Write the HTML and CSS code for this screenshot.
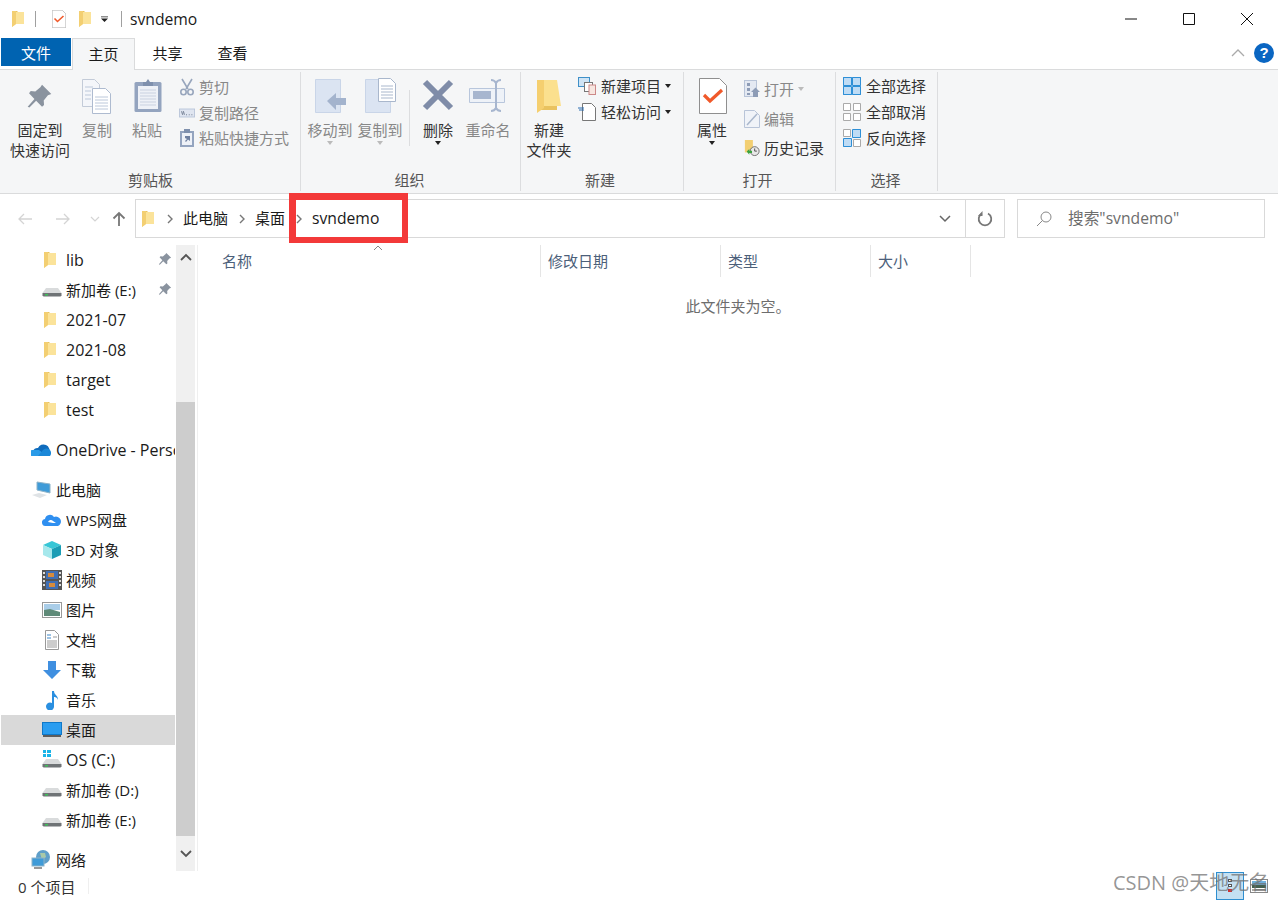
FILE: index.html

```html
<!DOCTYPE html>
<html lang="en">
<head>
  <meta charset="UTF-8" />
  <meta name="viewport" content="width=device-width, initial-scale=1.0" />
  <title>svndemo</title>
  <link rel="stylesheet" href="styles.css">
</head>
<body>
  <svg class="sprite" width="0" height="0">
    <symbol id="folder" viewBox="0 0 14 18">
      <path fill="#e9c25f" d="M1 1h5l1 1h6v12H1z"/>
      <path fill="#fbe39a" d="M1 2l5 0 0 0h7v12H5L1 17z"/>
      <path fill="#f3cf72" d="M1 1h4v13L1 17z"/>
    </symbol>
    <symbol id="pin" viewBox="0 0 16 16">
      <path fill="#8a939f" d="M9.500 1l5.500 5.500-2 .8-2.500 3 .2 2.700-1.200 1L6 10.500 2 14.500 1 14l4-4.500L1.800 6l1-1.200 2.700.2 3-2.500z"/>
    </symbol>
    <symbol id="drive" viewBox="0 0 20 12">
      <path fill="#d9dbdc" d="M4 2h12l3.500 5H.5z"/>
      <path fill="#6f7376" d="M.5 7h19v2.500l-1 1H1.500l-1-1z"/>
      <rect x="3" y="8" width="3" height="1.500" fill="#3fc05a"/>
    </symbol>
    <symbol id="doc-check" viewBox="0 0 28 36">
      <path fill="#fff" stroke="#8f8f8f" d="M.5.500h20l7 7v28H.5z"/>
      <path fill="none" stroke="#f0592a" stroke-width="3.200" d="M5 17l6 6L23 12"/>
    </symbol>
    <symbol id="grid" viewBox="0 0 18 18">
      <path fill="#fff" stroke="#aaa" d="M.5.500h7v7h-7zM10.500.500h7v7h-7zM.5 10.500h7v7h-7zM10.500 10.500h7v7h-7z"/>
    </symbol>
    <symbol id="chev-right" viewBox="0 0 8 10">
      <path fill="none" stroke="#777" stroke-width="1.400" d="M2 1l4 4-4 4"/>
    </symbol>
  </svg>

  <div class="window">
    <header class="titlebar">
      <div class="qat">
        <svg class="ic-folder"><use href="#folder"/></svg>
        <span class="qat-sep"></span>
        <svg class="ic-qat-check"><use href="#doc-check"/></svg>
        <svg class="ic-folder"><use href="#folder"/></svg>
        <svg class="ic-qat-drop" viewBox="0 0 8 8"><path d="M0 1h8v1H0zM0 3.500h8L4 7.500z" fill="#222"/></svg>
        <span class="qat-sep"></span>
        <span class="title-text">svndemo</span>
      </div>
      <div class="win-controls">
        <svg class="win-btn" viewBox="0 0 12 12"><path d="M0 6h12" stroke="#111"/></svg>
        <svg class="win-btn" viewBox="0 0 12 12"><path d="M.5.500h11v11H.5z" fill="none" stroke="#111"/></svg>
        <svg class="win-btn" viewBox="0 0 12 12"><path d="M0 0l12 12M12 0L0 12" stroke="#111"/></svg>
      </div>
    </header>

    <nav class="tabs">
      <div class="tab tab-file">文件</div>
      <div class="tab tab-active">主页</div>
      <div class="tab tab-plain">共享</div>
      <div class="tab tab-plain">查看</div>
      <div class="tabs-right">
        <svg class="ic-collapse" viewBox="0 0 14 8"><path d="M1 7l6-6 6 6" fill="none" stroke="#aaa" stroke-width="1.300"/></svg>
        <span class="help">?</span>
      </div>
    </nav>

    <section class="ribbon">
      <div class="group group-clip">
        <div class="group-body">
          <div class="big big-pin">
            <svg class="big-icon" viewBox="0 0 32 36"><use href="#pin" x="2" y="5" width="27" height="27"/></svg>
            <span>固定到<br>快速访问</span>
          </div>
          <div class="big big-copy dim">
            <svg class="big-icon" viewBox="0 0 32 36">
              <path fill="#f4f6fa" stroke="#c3cbd8" d="M1.500 1.500h12l5 5v22h-17z"/>
              <path fill="#fff" stroke="#aebbd0" d="M11.500 10.500h13l5 5v20h-18z"/>
              <path stroke="#bcc8da" d="M4 9h8M4 13h6M4 17h6M4 21h6M14 19h13M14 22h13M14 25h13M14 28h13M14 31h13"/>
            </svg>
            <span>复制</span>
          </div>
          <div class="big big-paste dim">
            <svg class="big-icon" viewBox="0 0 32 36">
              <path fill="#94a4bf" d="M5 4h24a1.500 1.500 0 0 1 1.500 1.500v27A1.500 1.500 0 0 1 29 34H5a1.500 1.500 0 0 1-1.500-1.500v-27A1.500 1.500 0 0 1 5 4z"/>
              <path fill="#eef1f7" d="M7 8h20v23H7z"/>
              <path fill="#7f90ad" d="M12 4h3l2-3 2 3h3v4H12z"/>
              <path stroke="#c9d1e0" d="M9 12h16M9 15h16M9 18h16M9 21h16M9 24h16M9 27h16"/>
            </svg>
            <span>粘贴</span>
          </div>
          <div class="small-col col-clip dim">
            <div class="small">
              <svg class="small-icon" viewBox="0 0 16 18"><path fill="none" stroke="#98a6bd" stroke-width="1.600" d="M3 1l6 10M13 1L7 11"/><circle cx="4.500" cy="14" r="2.700" fill="none" stroke="#98a6bd" stroke-width="1.600"/><circle cx="11.500" cy="14" r="2.700" fill="none" stroke="#98a6bd" stroke-width="1.600"/></svg>
              <span>剪切</span>
            </div>
            <div class="small">
              <svg class="small-icon" viewBox="0 0 18 12"><rect x=".5" y="1.500" width="17" height="9" fill="#dfe5f0" stroke="#b8c4d8"/><path d="M3 4l1 4M5 4l1 4M8 8h1M11 8h1M14 8h1" stroke="#5c6a80"/></svg>
              <span>复制路径</span>
            </div>
            <div class="small">
              <svg class="small-icon" viewBox="0 0 16 18"><path fill="#94a4bf" d="M1 2h14v16H1z"/><path fill="#eef1f7" d="M3 4h10v12H3z"/><path fill="#7f90ad" d="M5 0h6v4H5z"/><path fill="#6f80a0" d="M6 7h5v5l-2-1.500L7 13l-1-1 2-2-2-1z"/></svg>
              <span>粘贴快捷方式</span>
            </div>
          </div>
        </div>
        <div class="group-label">剪贴板</div>
      </div>

      <div class="group group-org">
        <div class="group-body">
          <div class="big big-50 dim">
            <svg class="big-icon" viewBox="0 0 32 36">
              <path fill="#dbe4f2" stroke="#c9d5e8" d="M1.500 1.500h25v33h-25z"/>
              <path fill="#a3b3cd" d="M13 23l9-8v5h10v7H22v5z"/>
            </svg>
            <span>移动到</span>
            <i class="caret caret-light"></i>
          </div>
          <div class="big big-50 dim">
            <svg class="big-icon" viewBox="0 0 32 36">
              <path fill="#dbe4f2" stroke="#c9d5e8" d="M1.500 1.500h25v33h-25z"/>
              <path fill="#fff" stroke="#a9b7cc" d="M14.500.500h12l5 5v18h-17z"/>
              <path stroke="#a9b7cc" d="M17 8h12M17 11h12M17 14h12M17 17h12M17 20h12"/>
            </svg>
            <span>复制到</span>
            <i class="caret caret-light"></i>
          </div>
          <span class="vsep"></span>
          <div class="big big-50">
            <svg class="big-icon" viewBox="0 0 32 36"><path stroke="#7f8ca8" stroke-width="6" d="M3 4l26 26M29 4L3 30"/></svg>
            <span>删除</span>
            <i class="caret"></i>
          </div>
          <div class="big big-50 dim">
            <svg class="big-icon big-icon-wide" viewBox="0 0 38 36">
              <path fill="#eef2f8" stroke="#b8c6dc" d="M.5 10.500h35v14H.5z"/>
              <rect x="4" y="13" width="18" height="8" fill="#a7b6cf"/>
              <path fill="none" stroke="#a7b6cf" stroke-width="2" d="M22 2c3 0 4 1 5 3 1-2 2-3 5-3M27 5v26M22 33c3 0 4-1 5-3 1 2 2 3 5 3"/>
            </svg>
            <span>重命名</span>
          </div>
        </div>
        <div class="group-label">组织</div>
      </div>

      <div class="group group-new">
        <div class="group-body">
          <div class="big big-new">
            <svg class="big-icon" viewBox="0 0 32 36">
              <path fill="#e9c25f" d="M4 2h20v30H4z"/>
              <path fill="#fbe08e" d="M10 2h14l4 26H10z"/>
              <path fill="#f5cf6f" d="M4 2h7v28l-7 5z"/>
            </svg>
            <span>新建<br>文件夹</span>
          </div>
          <div class="small-col col-new">
            <div class="small">
              <svg class="small-icon-l" viewBox="0 0 18 18">
                <rect x=".5" y=".5" width="11" height="9" fill="#cfe4f5" stroke="#3f90c8"/>
                <rect x="6.500" y="5.500" width="8" height="9" fill="#fff" stroke="#777"/>
                <rect x="11" y="8" width="6.500" height="9.500" fill="#f7e6e0" stroke="#c88"/>
              </svg>
              <span>新建项目</span><i class="caret caret-side"></i>
            </div>
            <div class="small">
              <svg class="small-icon-l" viewBox="0 0 18 18">
                <path fill="#fff" stroke="#777" d="M4.500.500h9l4 4v13h-13z"/>
                <path stroke="#2b6cb0" d="M0 5h6M1 7h5"/>
              </svg>
              <span>轻松访问</span><i class="caret caret-side"></i>
            </div>
          </div>
        </div>
        <div class="group-label">新建</div>
      </div>

      <div class="group group-open">
        <div class="group-body">
          <div class="big big-prop">
            <svg class="big-icon" viewBox="0 0 32 36"><use href="#doc-check" x="3" y="0" width="28" height="36"/></svg>
            <span>属性</span>
            <i class="caret"></i>
          </div>
          <div class="small-col col-open">
            <div class="small dim">
              <svg class="small-icon" viewBox="0 0 16 18"><rect x=".5" y=".5" width="12" height="16" fill="#e4e9f2" stroke="#b8c4d8"/><path d="M3 3h3v3H3zM3 8h3v3H3zM3 13h3v2H3z" fill="#8d9cb6"/><path fill="#8d9cb6" d="M7 12l4.500-4.500L16 12h-2v5H9v-5z"/></svg>
              <span>打开</span><i class="caret caret-light caret-side"></i>
            </div>
            <div class="small dim">
              <svg class="small-icon" viewBox="0 0 16 18"><path fill="#f0f3f8" stroke="#b8c4d8" d="M.5.500h10l5 5v12H.5z"/><path fill="none" stroke="#a9b7cc" stroke-width="1.500" d="M3 15L13 4"/></svg>
              <span>编辑</span>
            </div>
            <div class="small">
              <svg class="small-icon" viewBox="0 0 18 18"><path fill="#f3cf72" d="M1 0h9v14H1z"/><circle cx="12" cy="12.500" r="5" fill="#e8e8e8" stroke="#666"/><path d="M12 9.500v3h2.500" fill="none" stroke="#444"/><path fill="#3aa341" d="M3 13l3-3v2h3v2.500H6v2z"/></svg>
              <span>历史记录</span>
            </div>
          </div>
        </div>
        <div class="group-label">打开</div>
      </div>

      <div class="group group-sel">
        <div class="group-body">
          <div class="small-col col-sel">
            <div class="small">
              <svg class="small-icon" viewBox="0 0 18 18"><path fill="#bfdcf5" stroke="#2e8fd6" d="M.5.500h17v17H.5z"/><path stroke="#fff" stroke-width="1.500" d="M9 .5v17M.5 9h17"/><path stroke="#2e8fd6" d="M.5 .5h8v8h-8zM9.500 .5h8v8h-8zM.5 9.500h8v8h-8zM9.500 9.500h8v8h-8z" fill="none"/></svg>
              <span>全部选择</span>
            </div>
            <div class="small">
              <svg class="small-icon" viewBox="0 0 18 18"><use href="#grid"/></svg>
              <span>全部取消</span>
            </div>
            <div class="small">
              <svg class="small-icon" viewBox="0 0 18 18"><use href="#grid"/><path fill="#bfdcf5" stroke="#2e8fd6" d="M9.500.500h8v8h-8zM.5 9.500h8v8h-8z"/></svg>
              <span>反向选择</span>
            </div>
          </div>
        </div>
        <div class="group-label">选择</div>
      </div>
    </section>

    <div class="addr-row">
      <div class="nav-btns">
        <svg class="nav-arrow" viewBox="0 0 16 14"><path d="M15 7H2M7 2L2 7l5 5" fill="none" stroke="#d4d4d4" stroke-width="1.300"/></svg>
        <svg class="nav-arrow" viewBox="0 0 16 14"><path d="M1 7h13M9 2l5 5-5 5" fill="none" stroke="#d4d4d4" stroke-width="1.300"/></svg>
        <svg class="nav-down" viewBox="0 0 10 6"><path d="M1 1l4 4 4-4" fill="none" stroke="#d4d4d4" stroke-width="1.200"/></svg>
        <svg class="nav-up" viewBox="0 0 14 16"><path d="M7 15V2M1.500 7.500L7 2l5.500 5.500" fill="none" stroke="#777" stroke-width="1.800"/></svg>
      </div>
      <div class="addr-box">
        <svg class="ic-folder"><use href="#folder"/></svg>
        <svg class="crumb-chev"><use href="#chev-right"/></svg>
        <span class="crumb">此电脑</span>
        <svg class="crumb-chev"><use href="#chev-right"/></svg>
        <span class="crumb">桌面</span>
        <svg class="crumb-chev"><use href="#chev-right"/></svg>
        <span class="crumb crumb-latin">svndemo</span>
        <div class="addr-end">
          <svg class="addr-drop" viewBox="0 0 12 8"><path d="M1 1l5 5 5-5" fill="none" stroke="#666" stroke-width="1.500"/></svg>
        </div>
        <div class="addr-refresh">
          <svg class="refresh-icon" viewBox="0 0 16 16"><path d="M5 2.500A6.300 6.300 0 1 0 11 2.500" fill="none" stroke="#777" stroke-width="1.800"/><path d="M5.500 0v5H1z" fill="#777"/></svg>
        </div>
      </div>
      <div class="search-box">
        <svg class="search-icon" viewBox="0 0 16 16"><circle cx="10" cy="6" r="5" fill="none" stroke="#888"/><path d="M6.500 9.500L1 15" stroke="#888"/></svg>
        <span class="search-text">搜索"svndemo"</span>
      </div>
    </div>

    <main class="content">
      <aside class="sidebar">
        <div class="tree">
          <div class="row row-2"><svg class="ic-folder"><use href="#folder"/></svg><span class="name latin">lib</span><svg class="row-pin"><use href="#pin"/></svg></div>
          <div class="row row-2"><svg class="ic-drive"><use href="#drive"/></svg><span class="name">新加卷 (E:)</span><svg class="row-pin"><use href="#pin"/></svg></div>
          <div class="row row-2"><svg class="ic-folder"><use href="#folder"/></svg><span class="name latin">2021-07</span></div>
          <div class="row row-2"><svg class="ic-folder"><use href="#folder"/></svg><span class="name latin">2021-08</span></div>
          <div class="row row-2"><svg class="ic-folder"><use href="#folder"/></svg><span class="name latin">target</span></div>
          <div class="row row-2"><svg class="ic-folder"><use href="#folder"/></svg><span class="name latin">test</span></div>

          <div class="row row-1 row-gap">
            <svg class="ic-row" viewBox="0 0 20 14"><path fill="#0f6cbd" d="M2 8a5 5 0 0 1 5-3 6 6 0 0 1 11 5z"/><path fill="#2a9be8" d="M1 13a3 3 0 0 1 1-6h6l7 6z"/><path fill="#1b88d8" d="M7 13l5-6a4 4 0 0 1 7 6z"/></svg>
            <span class="name latin">OneDrive - Personal</span>
          </div>

          <div class="row row-1 row-gap">
            <svg class="ic-row" viewBox="0 0 20 18"><path fill="#3f9bd8" stroke="#8db3c9" d="M6 1l13 2v9L6 9z"/><path fill="#dfe3e6" d="M1 14l7-2 8 2-7 3z"/></svg>
            <span class="name">此电脑</span>
          </div>
          <div class="row row-2">
            <svg class="ic-row" viewBox="0 0 20 14"><path fill="#2f8ff0" d="M4 13a3.500 3.500 0 0 1-1-7 5 5 0 0 1 9-2 4.500 4.500 0 0 1 4 9z"/><path fill="#fff" d="M6 9a3 3 0 0 1 5-1l3 2h-3z"/></svg>
            <span class="name">WPS网盘</span>
          </div>
          <div class="row row-2">
            <svg class="ic-row" viewBox="0 0 20 18"><path fill="#37c6d6" d="M10 0l9 4-9 4-9-4z"/><path fill="#a6e8ec" d="M1 4l9 4v10l-9-4z"/><path fill="#1a9db5" d="M19 4l-9 4v10l9-4z"/></svg>
            <span class="name">3D 对象</span>
          </div>
          <div class="row row-2">
            <svg class="ic-row" viewBox="0 0 20 20"><rect width="20" height="20" fill="#555"/><rect x="4" y="1" width="12" height="8" fill="#3f6fb5"/><rect x="4" y="11" width="12" height="8" fill="#3f6fb5"/><path fill="#d68b3c" d="M6 3h6v4H6zM7 13h6v4H7z"/><path fill="#ddd" d="M1 2h2v2H1zM1 6h2v2H1zM1 10h2v2H1zM1 14h2v2H1zM17 2h2v2h-2zM17 6h2v2h-2zM17 10h2v2h-2zM17 14h2v2h-2z"/></svg>
            <span class="name">视频</span>
          </div>
          <div class="row row-2">
            <svg class="ic-row" viewBox="0 0 20 16"><rect x=".5" y=".5" width="19" height="15" fill="#fff" stroke="#999"/><rect x="2" y="2" width="16" height="6" fill="#a9cde8"/><path fill="#5f8a78" d="M2 8l6-1 10 3v4H2z"/></svg>
            <span class="name">图片</span>
          </div>
          <div class="row row-2">
            <svg class="ic-row" viewBox="0 0 20 20"><path fill="#fff" stroke="#999" d="M3.500.500h9l4 4v15h-13z"/><path stroke="#3a86c8" d="M5 5h4M5 8h4"/><path stroke="#999" d="M11 7h4M5 11h10M5 13h10M5 15h10M5 17h10"/></svg>
            <span class="name">文档</span>
          </div>
          <div class="row row-2">
            <svg class="ic-row" viewBox="0 0 20 20"><path fill="#3f8fe0" d="M6 1h8v9h5l-9 9-9-9h5z"/></svg>
            <span class="name">下载</span>
          </div>
          <div class="row row-2">
            <svg class="ic-row" viewBox="0 0 20 20"><path fill="#2a8fe0" d="M10 1h2c0 4 4 4 4 9-1-3-3-3-4-3v9a4 4 0 1 1-2-3z"/></svg>
            <span class="name">音乐</span>
          </div>
          <div class="row row-2 row-sel">
            <svg class="ic-row" viewBox="0 0 20 16"><rect x=".5" y=".5" width="19" height="12" fill="#2a9df0" stroke="#0f78c8"/><path d="M1 14h18" stroke="#333" stroke-width="1.500"/></svg>
            <span class="name">桌面</span>
          </div>
          <div class="row row-2">
            <svg class="ic-row" viewBox="0 0 20 20"><path fill="#19b4e8" d="M1 0h3v3H1zM5 0h4v3H5zM1 4h3v3H1zM5 4h4v3H5z"/><use href="#drive" x="0" y="7" width="20" height="12"/></svg>
            <span class="name latin">OS (C:)</span>
          </div>
          <div class="row row-2"><svg class="ic-drive"><use href="#drive"/></svg><span class="name">新加卷 (D:)</span></div>
          <div class="row row-2"><svg class="ic-drive"><use href="#drive"/></svg><span class="name">新加卷 (E:)</span></div>

          <div class="row row-1 row-gap">
            <svg class="ic-row" viewBox="0 0 20 20"><circle cx="12" cy="7" r="7" fill="#5f9fc9"/><path fill="#a8c9a8" d="M9 3l5 0 1 4-4 3z"/><rect x="1" y="8" width="12" height="8" fill="#3f9bd8" stroke="#8db3c9"/><path d="M3 18h8" stroke="#999" stroke-width="2"/></svg>
            <span class="name">网络</span>
          </div>
        </div>
        <div class="scrollbar">
          <div class="sb-btn"><svg viewBox="0 0 12 8"><path d="M1 7l5-5 5 5" fill="none" stroke="#555" stroke-width="1.800"/></svg></div>
          <div class="sb-gap-top"></div>
          <div class="sb-thumb"></div>
          <div class="sb-btn sb-btn-low"><svg viewBox="0 0 12 8"><path d="M1 1l5 5 5-5" fill="none" stroke="#555" stroke-width="1.800"/></svg></div>
        </div>
      </aside>

      <section class="files">
        <svg class="sort-mark" viewBox="0 0 10 6"><path d="M1 5l4-4 4 4" fill="none" stroke="#888"/></svg>
        <div class="col-heads">
          <div class="col-head col-name">名称</div>
          <div class="col-head col-date">修改日期</div>
          <div class="col-head col-type">类型</div>
          <div class="col-head col-size">大小</div>
        </div>
        <p class="empty">此文件夹为空。</p>
      </section>
    </main>

    <footer class="statusbar">
      <span class="status-text">0 个项目</span>
      <span class="status-sep"></span>
      <div class="view-btns">
        <div class="view-btn view-btn-on">
          <svg viewBox="0 0 12 16"><path fill="#555" d="M4 1h4v3H4zM4 6h4v3H4z"/><path fill="#fff" d="M5 2h2v1H5zM5 7h2v1H5z"/><path fill="#c33" d="M4 11h4v3H4z"/></svg>
        </div>
        <svg class="view-thumb" viewBox="0 0 18 14"><rect x=".5" y=".5" width="17" height="13" fill="#fff" stroke="#888"/><rect x="2" y="2" width="14" height="4" fill="#6fb0dc"/><path fill="#44604f" d="M2 6h14v3H2z"/><path d="M2 11h14" stroke="#555"/></svg>
      </div>
    </footer>

    <div class="highlight"></div>
    <div class="watermark">CSDN @天地无名</div>
  </div>
</body>
</html>
```

FILE: styles.css

```css
* {
  box-sizing: border-box;
}
body {
  margin: 0;
  background: #fff;
  color: #1a1a1a;
  font-family: "Open Sans", "Noto Sans CJK SC", sans-serif;
  font-size: 15px;
}
.sprite {
  position: absolute;
}
.window {
  position: relative;
  width: 1278px;
  height: 901px;
  overflow: hidden;
}
.ic-folder {
  width: 14px;
  height: 18px;
  flex: none;
}

/* title bar */
.titlebar {
  height: 38px;
  display: flex;
  justify-content: space-between;
  align-items: center;
}
.qat {
  display: flex;
  align-items: center;
  padding-left: 11px;
}
.qat-sep {
  width: 1px;
  height: 16px;
  background: #a0a0a0;
  margin: 0 0 0 10px;
}
.ic-qat-check {
  width: 14px;
  height: 18px;
  margin: 0 12px 0 16px;
}
.ic-qat-drop {
  width: 7px;
  height: 8px;
  margin-left: 9px;
}
.qat .ic-qat-drop + .qat-sep {
  margin-left: 13px;
}
.title-text {
  font-size: 15.700px;
  margin-left: 8px;
}
.win-controls {
  display: flex;
  gap: 46px;
  padding-right: 25px;
}
.win-btn {
  width: 12px;
  height: 12px;
}

/* tabs */
.tabs {
  height: 32px;
  display: flex;
  align-items: flex-start;
  padding-left: 1px;
  border-bottom: 1px solid #dadbdc;
}
.tab {
  height: 28px;
  line-height: 31px;
  text-align: center;
}
.tab-file {
  width: 70px;
  background: #0063b1;
  color: #fff;
}
.tab-active {
  width: 63px;
  height: 32px;
  margin-left: 1px;
  background: #f5f6f7;
  border: 1px solid #dadbdc;
  border-bottom: none;
  position: relative;
}
.tab-plain {
  width: 65px;
}
.tabs-right {
  margin-left: auto;
  display: flex;
  align-items: center;
  gap: 9px;
  height: 30px;
  padding-right: 4px;
}
.ic-collapse {
  width: 14px;
  height: 8px;
}
.help {
  width: 20px;
  height: 20px;
  border-radius: 50%;
  background: #0a66c2;
  color: #fff;
  font: bold 15px/20px "Liberation Sans", sans-serif;
  text-align: center;
}

/* ribbon */
.ribbon {
  height: 124px;
  display: flex;
  padding: 2px 0 0 1px;
  background: #f5f6f7;
  border-bottom: 1px solid #dadbdc;
  color: #333;
}
.group {
  display: flex;
  flex-direction: column;
  height: 119px;
  border-right: 1px solid #dcdddf;
}
.group-clip { width: 300px; }
.group-org { width: 220px; }
.group-new { width: 163px; }
.group-open { width: 152px; }
.group-sel { width: 102px; }
.group-body {
  flex: 1;
  display: flex;
}
.group-label {
  height: 21px;
  line-height: 20px;
  text-align: center;
  color: #555;
}
.group-org .group-label { padding-right: 2px; }
.group-new .group-label { padding-right: 4px; }
.group-open .group-label { padding-right: 4px; }
.group-sel .group-label { padding-right: 2px; }
.big {
  display: flex;
  flex-direction: column;
  align-items: center;
  padding-top: 6px;
  text-align: center;
  line-height: 20px;
  flex: none;
}
.big-icon {
  width: 32px;
  height: 36px;
  margin-bottom: 6px;
}
.big-icon-wide {
  width: 38px;
}
.big-pin { width: 68px; margin-left: 5px; color: #333; }
.big-copy { width: 46px; }
.big-paste { width: 54px; }
.big-50 { width: 50px; }
.big-new { width: 56px; }
.big-prop { width: 56px; }
.group-org .big:first-child { margin-left: 4px; }
.dim {
  color: #888;
}
.caret {
  display: block;
  width: 0;
  height: 0;
  margin-top: 1px;
  border: 3.500px solid transparent;
  border-top: 4px solid #222;
  border-bottom: none;
}
.caret-light {
  border-top-color: #bbb;
}
.caret-side {
  margin: 0 0 0 4px;
}
.vsep {
  width: 1px;
  height: 56px;
  margin: 18px 3px 0 4px;
  background: #dcdddf;
}
.small-col {
  display: flex;
  flex-direction: column;
}
.small {
  display: flex;
  align-items: center;
  line-height: 20px;
}
.small-icon {
  width: 16px;
  height: 18px;
  margin-right: 4px;
  flex: none;
}
.small-icon-l {
  width: 18px;
  height: 18px;
  margin-right: 5px;
  flex: none;
}
.col-clip {
  margin: 5px 0 0 5px;
  gap: 5.500px;
}
.col-new {
  margin: 4px 0 0 1px;
  gap: 6px;
}
.col-open {
  margin: 7px 0 0 4px;
  gap: 9.500px;
}
.col-sel {
  margin: 4px 0 0 7px;
  gap: 6px;
}
.col-sel .small-icon {
  width: 18px;
  margin-right: 5px;
}

/* address row */
.addr-row {
  height: 49px;
  display: flex;
  padding-top: 5px;
}
.nav-btns {
  width: 135px;
  height: 39px;
  display: flex;
  align-items: center;
  padding-left: 17px;
}
.nav-arrow {
  width: 16px;
  height: 14px;
  margin-right: 22px;
}
.nav-down {
  width: 10px;
  height: 6px;
  margin-left: -3px;
}
.nav-up {
  width: 14px;
  height: 16px;
  margin-left: 12px;
}
.addr-box {
  width: 870px;
  height: 39px;
  display: flex;
  align-items: center;
  padding-left: 5px;
  border: 1px solid #d9d9d9;
}
.addr-box .ic-folder {
  margin-right: 1px;
}
.crumb-chev {
  width: 8px;
  height: 10px;
  margin: 0 9px 0 10px;
  flex: none;
}
.crumb {
  margin-top: -2px;
}
.crumb-latin {
  font-size: 15.700px;
}
.addr-end {
  margin-left: auto;
  width: 40px;
  height: 100%;
  display: flex;
  align-items: center;
  justify-content: center;
}
.addr-drop {
  width: 12px;
  height: 8px;
}
.addr-refresh {
  width: 39px;
  height: 100%;
  display: flex;
  align-items: center;
  justify-content: center;
  border-left: 1px solid #d9d9d9;
}
.refresh-icon {
  width: 16px;
  height: 16px;
}
.search-box {
  width: 248px;
  height: 39px;
  margin-left: 12px;
  display: flex;
  align-items: center;
  padding-left: 18px;
  border: 1px solid #d9d9d9;
  color: #6d6d6d;
  font-size: 15.700px;
}
.search-text {
  margin-top: -2px;
}
.search-icon {
  width: 16px;
  height: 16px;
  margin-right: 16px;
}

/* main */
.content {
  height: 628px;
  display: flex;
  padding-top: 2px;
}
.sidebar {
  width: 198px;
  display: flex;
  border-right: 1px solid #efefef;
}
.tree {
  width: 176px;
  padding-left: 1px;
  overflow: hidden;
}
.row {
  height: 30px;
  width: 174px;
  display: flex;
  align-items: center;
  position: relative;
  white-space: nowrap;
}
.row-1 { padding-left: 30px; }
.row-2 { padding-left: 41px; }
.row-gap { margin-top: 10px; }
.row-sel { background: #d9d9d9; }
.row .ic-folder {
  margin: 0 9px 0 1px;
  width: 14px;
  height: 18px;
}
.ic-drive {
  width: 20px;
  height: 12px;
  margin: 3px 4px 0 0;
  flex: none;
}
.ic-row {
  width: 20px;
  height: 20px;
  margin-right: 4px;
  flex: none;
}
.row-1 .ic-row {
  margin-right: 5px;
}
.name {
  line-height: 20px;
  overflow: hidden;
}
.name.latin {
  font-size: 16px;
}
.row-pin {
  position: absolute;
  left: 157px;
  top: 7px;
  width: 14px;
  height: 14px;
}
.scrollbar {
  width: 19px;
  display: flex;
  flex-direction: column;
  background: #f0f0f0;
}
.sb-btn {
  height: 24px;
  display: flex;
  align-items: center;
  justify-content: center;
}
.sb-btn svg {
  width: 12px;
  height: 8px;
}
.sb-btn-low {
  height: 35px;
}
.sb-gap-top {
  height: 133px;
}
.sb-thumb {
  height: 434px;
  background: #cdcdcd;
}
.files {
  flex: 1;
  position: relative;
}
.sort-mark {
  position: absolute;
  left: 175px;
  top: 0;
  width: 10px;
  height: 6px;
}
.col-heads {
  display: flex;
  height: 32px;
  padding-left: 18px;
}
.col-head {
  line-height: 32px;
  padding-left: 7px;
  border-right: 1px solid #e5e5e5;
  color: #4c607a;
}
.col-name { width: 325px; padding-left: 6px; }
.col-date { width: 180px; }
.col-type { width: 150px; }
.col-size { width: 100px; }
.empty {
  margin: 19px 0 0;
  width: 1080px;
  text-align: center;
  color: #6d6d6d;
  line-height: 20px;
}

/* status bar */
.statusbar {
  height: 30px;
  display: flex;
  align-items: center;
  padding-left: 18px;
  color: #333;
}
.status-sep {
  width: 1px;
  height: 16px;
  margin-left: 13px;
  background: #efefef;
}
.view-btns {
  margin-left: auto;
  display: flex;
  align-items: center;
  gap: 6px;
  padding-right: 10px;
}
.view-btn {
  width: 28px;
  height: 28px;
  display: flex;
  align-items: center;
  justify-content: center;
}
.view-btn-on {
  background: #c4e0f2;
  border: 1px solid #2f8fd0;
}
.view-btn svg {
  width: 12px;
  height: 16px;
}
.view-thumb {
  width: 18px;
  height: 14px;
}

/* over the screenshot */
.highlight {
  position: absolute;
  left: 289px;
  top: 193px;
  width: 119px;
  height: 50px;
  border: solid #f33939;
  border-width: 7px 6px 6px 7px;
}
.watermark {
  position: absolute;
  left: 1113px;
  top: 869px;
  font-size: 20px;
  line-height: 28px;
  color: rgba(110, 110, 110, 0.72);
}
```
